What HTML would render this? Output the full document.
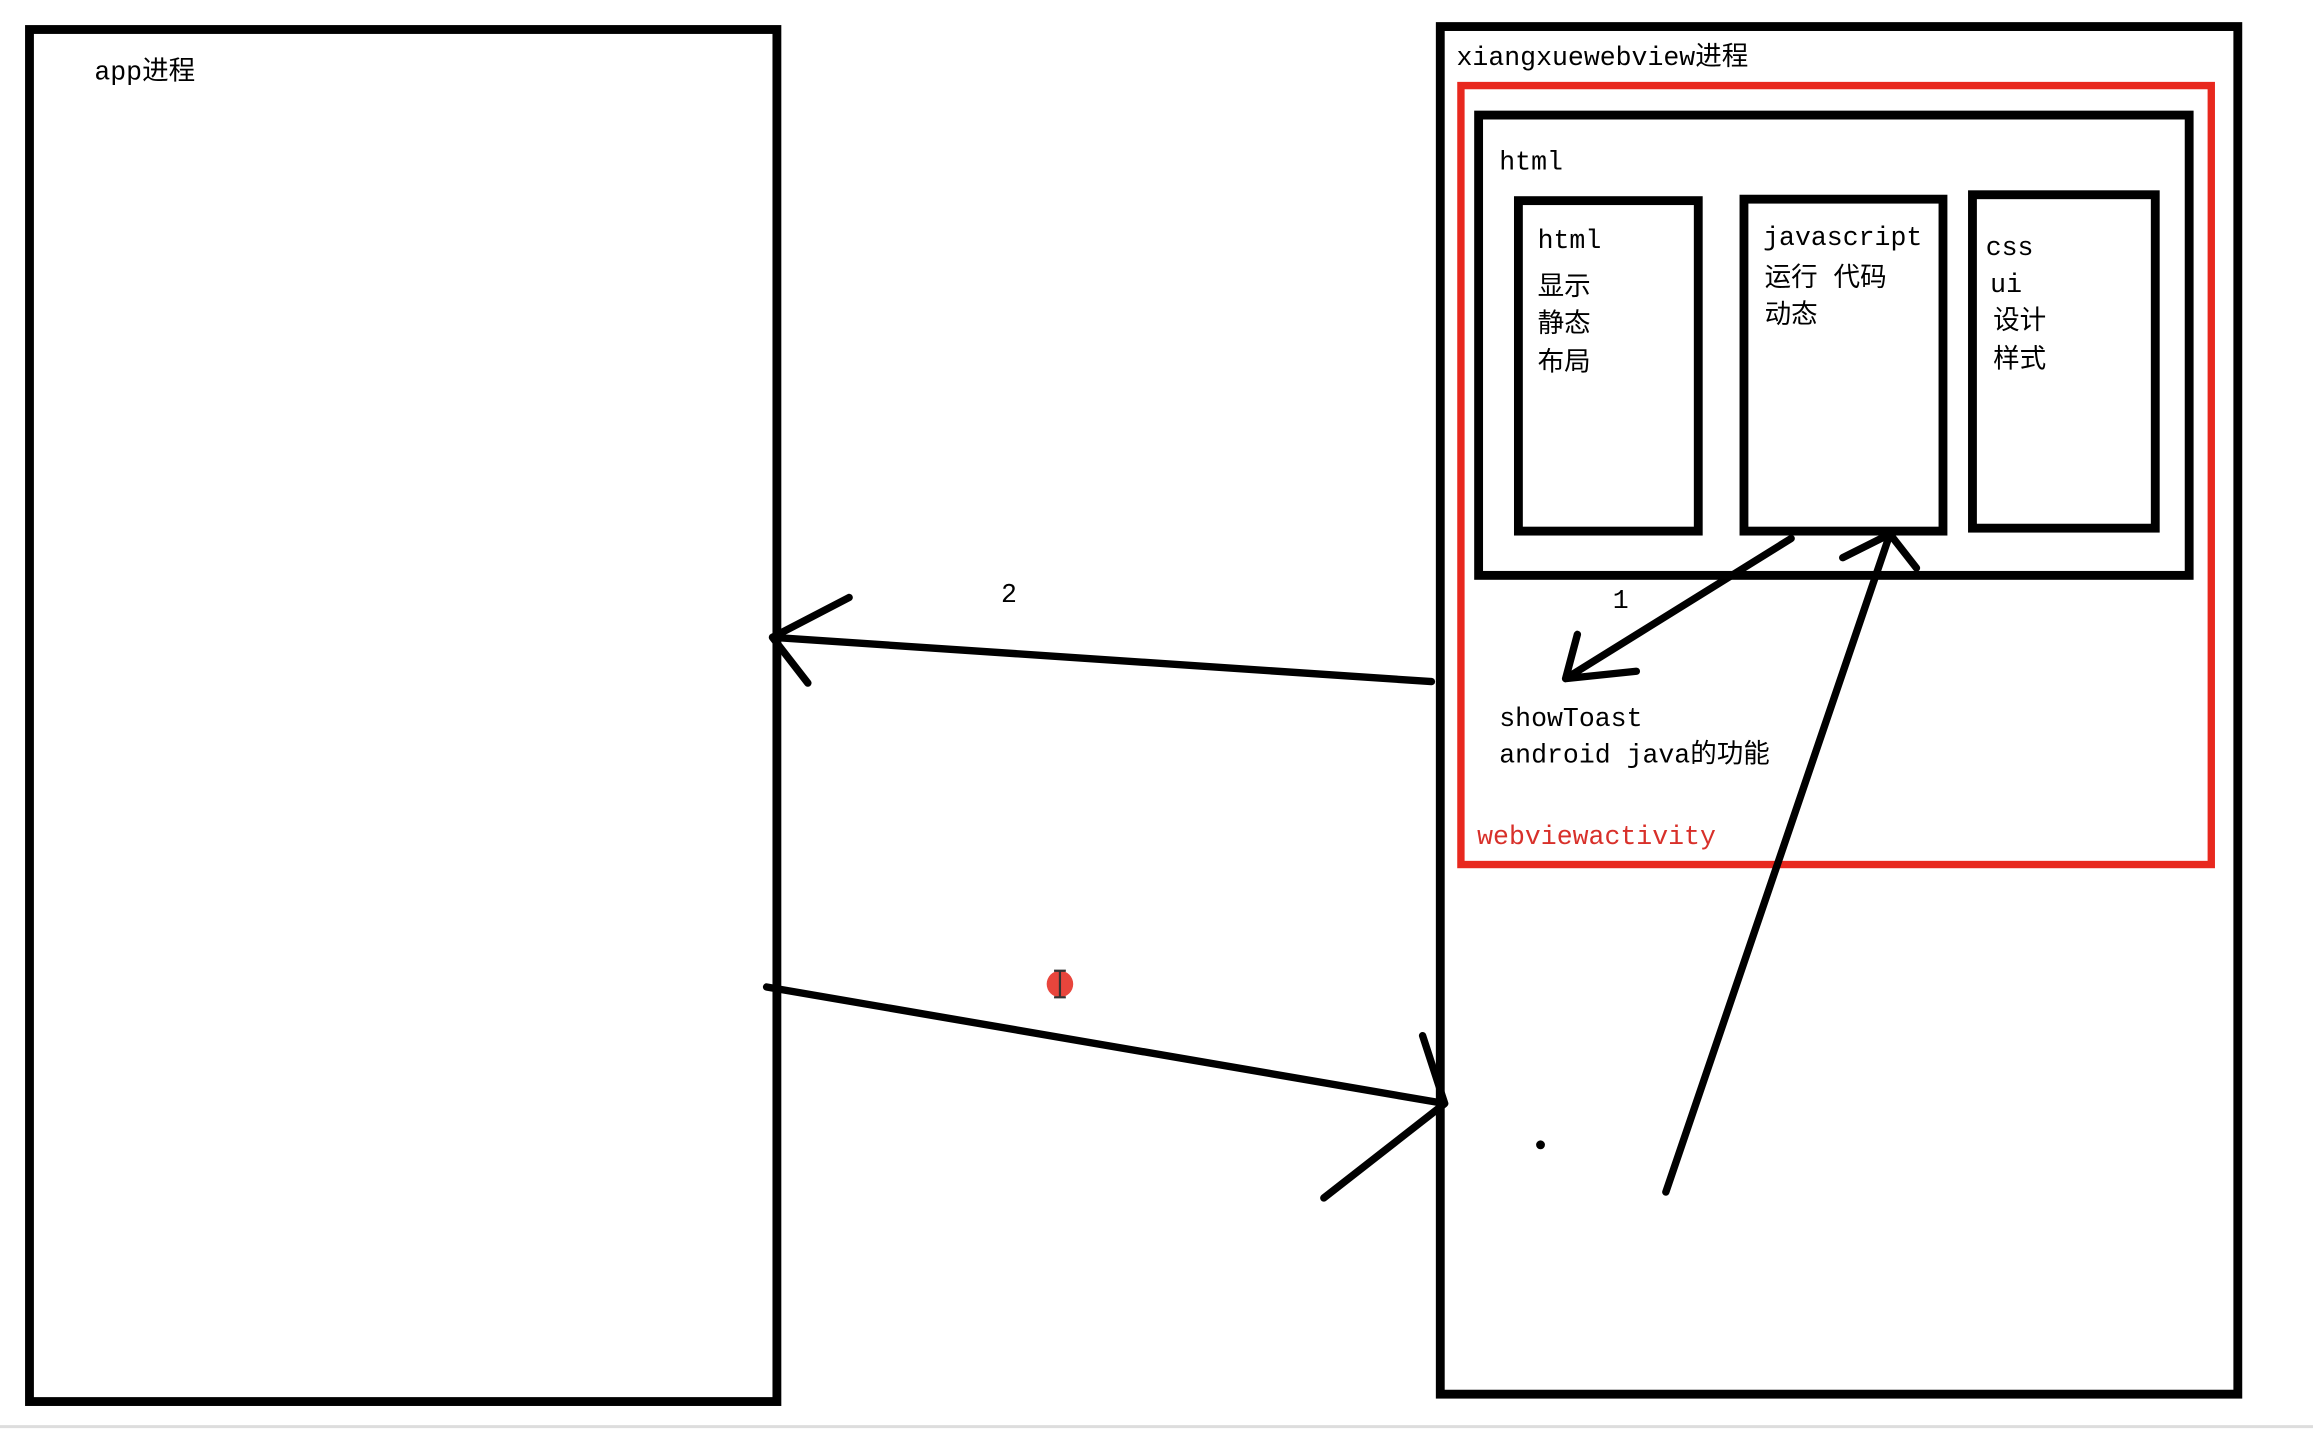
<!DOCTYPE html>
<html><head><meta charset="utf-8"><style>
html,body{margin:0;padding:0;background:#fff;overflow:hidden}
svg{display:block}
text{font-family:"Liberation Mono","Noto Sans CJK SC",monospace;font-size:18px;fill:#000}
</style></head><body>
<svg width="2313" height="1434" viewBox="0 0 1569 972" preserveAspectRatio="none">
<rect width="1569" height="972" fill="#fff"/>
<g fill="none" stroke="#000" stroke-width="6">
<rect x="20" y="20" width="507" height="930"/>
<rect x="977" y="18" width="541" height="927"/>
<rect x="1003" y="78" width="482" height="312"/>
<rect x="1030" y="136" width="122" height="224"/>
<rect x="1183" y="135" width="135" height="225"/>
<rect x="1338" y="132" width="124" height="226"/>
</g>
<rect x="991" y="58" width="509" height="528" fill="none" stroke="#e8281e" stroke-width="5"/>
<g fill="none" stroke="#000" stroke-width="5" stroke-linecap="round" stroke-linejoin="round">
<path d="M971 462 L524 432 M576 405 L524 432 L548 463"/>
<path d="M520 669 L980 748 M965 702 L980 748 L898 812"/>
<path d="M1215 365 L1062 460 M1070 430 L1062 460 L1110 455"/>
<path d="M1130 808 L1282 362 M1250 378 L1282 362 L1300 385"/>
</g>
<circle cx="1045" cy="776" r="3" fill="#000"/>
<circle cx="719" cy="667" r="9" fill="#e8453c"/>
<path d="M715 658h8M719 658v18M715 676h8" stroke="#333" stroke-width="1.5" fill="none"/>
<text x="64" y="54">app进程</text>
<text x="988" y="44">xiangxuewebview进程</text>
<text x="1017" y="115">html</text>
<text x="1043" y="168">html</text>
<text x="1043" y="200">显示</text>
<text x="1043" y="225">静态</text>
<text x="1043" y="251">布局</text>
<text x="1196" y="166">javascript</text>
<text x="1197" y="194">运行 代码</text>
<text x="1197" y="219">动态</text>
<text x="1347" y="173">css</text>
<text x="1350" y="198">ui</text>
<text x="1352" y="223">设计</text>
<text x="1352" y="249">样式</text>
<text x="679" y="408">2</text>
<text x="1094" y="412">1</text>
<text x="1017" y="492">showToast</text>
<text x="1017" y="517">android java的功能</text>
<text x="1002" y="572" style="fill:#d8302a">webviewactivity</text>
<line x1="0" y1="967" x2="1569" y2="967" stroke="#ddd" stroke-width="2"/>
</svg>
</body></html>
